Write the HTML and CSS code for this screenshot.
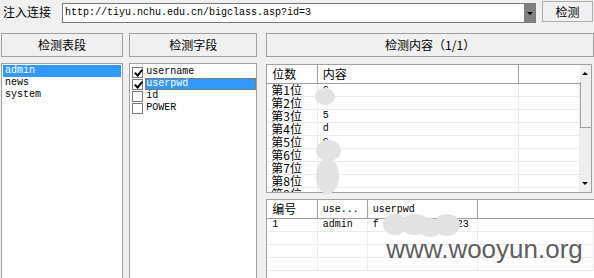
FILE: index.html
```html
<!DOCTYPE html>
<html lang="zh-CN">
<head>
  <meta charset="UTF-8" />
  <title>注入检测</title>
  <link rel="stylesheet" href="styles.css">
</head>
<body>
  <div class="window">
    <div class="topbar">
      <span class="label">注入连接</span>
      <div class="combo">
        <span class="combo-text">http://tiyu.nchu.edu.cn/bigclass.asp?id=3</span>
        <span class="combo-arrow"></span>
      </div>
      <button class="btn detect">检测</button>
    </div>

    <div class="panels">
      <div class="col col-tables">
        <div class="head-btn">检测表段</div>
        <ul class="listbox">
          <li class="selected">admin</li>
          <li>news</li>
          <li>system</li>
        </ul>
      </div>

      <div class="col col-fields">
        <div class="head-btn">检测字段</div>
        <ul class="listbox checklist">
          <li><span class="check on"></span><span class="item">username</span></li>
          <li><span class="check on"></span><span class="item focused">userpwd</span></li>
          <li><span class="check"></span><span class="item">id</span></li>
          <li><span class="check"></span><span class="item">POWER</span></li>
        </ul>
      </div>

      <div class="col col-content">
        <div class="head-btn">检测内容（1/1）</div>

        <div class="grid-box top-grid">
          <div class="grid-view">
            <table class="grid">
              <colgroup><col class="c-pos"><col class="c-val"><col></colgroup>
              <thead>
                <tr><th class="cjk">位数</th><th class="cjk">内容</th><th></th></tr>
              </thead>
              <tbody id="digits"></tbody>
            </table>
          </div>
          <div class="vscroll">
            <div class="sb-btn up"></div>
            <div class="sb-thumb"></div>
            <div class="sb-track"></div>
            <div class="sb-btn down"></div>
          </div>
        </div>

        <div class="grid-box bottom-grid">
          <table class="grid">
            <colgroup><col class="c-id"><col class="c-user"><col class="c-pwd"><col></colgroup>
            <thead>
              <tr><th class="cjk">编号</th><th>use...</th><th>userpwd</th><th></th></tr>
            </thead>
            <tbody>
              <tr><td>1</td><td>admin</td><td>f<span class="gap"></span>23</td><td></td></tr>
              <tr><td></td><td></td><td></td><td></td></tr>
              <tr><td></td><td></td><td></td><td></td></tr>
              <tr><td></td><td></td><td></td><td></td></tr>
            </tbody>
          </table>
        </div>

        <!-- blurred-out values -->
        <span class="blob" style="left:49px;top:55px;width:20px;height:17px"></span>
        <span class="blob" style="left:50px;top:107px;width:25px;height:21px"></span>
        <span class="blob" style="left:50px;top:125px;width:23px;height:36px"></span>
        <span class="blob" style="left:117px;top:181px;width:24px;height:21px"></span>
        <span class="blob" style="left:134px;top:181px;width:30px;height:21px"></span>
        <span class="blob" style="left:152px;top:185px;width:24px;height:19px"></span>
        <span class="blob" style="left:168px;top:181px;width:26px;height:22px"></span>

        <div class="watermark">www.wooyun.org</div>
      </div>
    </div>
  </div>

  <script>
    const values = ['c', '', '5', 'd', 'c', '', '', '', ''];
    const body = document.getElementById('digits');
    values.forEach((v, i) => {
      const tr = document.createElement('tr');
      tr.innerHTML = `<td class="cjk">第${i + 1}位</td><td>${v}</td><td></td>`;
      body.appendChild(tr);
    });
  </script>
</body>
</html>
```

FILE: styles.css
```css
* {
  margin: 0;
  padding: 0;
  box-sizing: border-box;
}

body {
  width: 594px;
  height: 278px;
  overflow: hidden;
  background: #f0f0f0;
  font-family: 'Liberation Mono', monospace;
  font-size: 10px;
  color: #000;
}

.window {
  width: 594px;
  height: 278px;
  overflow: hidden;
}

.topbar {
  display: flex;
  align-items: flex-start;
  height: 33px;
  padding: 1px 1px 0 3px;
}

.label,
.head-btn,
.btn,
.cjk {
  font-family: 'Noto Sans CJK SC', 'Noto Sans', sans-serif;
  font-size: 12px;
}

.label {
  margin-top: 3px;
  line-height: 16px;
  width: 59px;
}

.combo {
  display: flex;
  width: 474px;
  height: 20px;
  margin-top: 2px;
  border: 1px solid #7a7a7a;
  background: white;
}

.combo-text {
  flex: 1;
  padding-left: 2px;
  line-height: 17px;
  white-space: nowrap;
}

.combo-arrow {
  position: relative;
  width: 11px;
  background: #808080;
}

.combo-arrow::after {
  content: '';
  position: absolute;
  left: 3px;
  top: 8px;
  border-left: 3px solid transparent;
  border-right: 3px solid transparent;
  border-top: 3px solid #000;
}

.btn {
  width: 51px;
  height: 21px;
  margin-left: 6px;
  border: 1px solid #adadad;
  background: #f0f0f0;
  color: #000;
  line-height: 18px;
}

.panels {
  display: flex;
  padding-left: 1px;
}

.col {
  display: flex;
  flex-direction: column;
}

.col-tables {
  width: 123px;
}

.col-fields {
  width: 129px;
  margin-left: 6px;
}

.col-content {
  position: relative;
  width: 330px;
  margin-left: 9px;
}

.head-btn {
  height: 24px;
  border: 1px solid #a0a0a0;
  background: #f0f0f0;
  text-align: center;
  line-height: 22px;
}

.listbox {
  list-style: none;
  height: 230px;
  margin-top: 6px;
  padding: 1px;
  border: 1px solid #a0a0a0;
  background: white;
}

.col-tables .listbox {
  width: 122px;
}

.listbox li {
  height: 12px;
  line-height: 12px;
  padding-left: 2px;
  white-space: nowrap;
}

.listbox li.selected {
  background: #3399ff;
  color: white;
}

.checklist {
  padding: 2px 0 0 2px;
}

.checklist li {
  display: flex;
  align-items: center;
  padding-left: 0;
}

.check {
  position: relative;
  width: 11px;
  height: 11px;
  border: 1px solid #7a7a7a;
  background: white;
  flex-shrink: 0;
}

.check.on::after {
  content: '';
  position: absolute;
  left: 3px;
  top: 0;
  width: 3px;
  height: 6px;
  border-right: 2px solid #000;
  border-bottom: 2px solid #000;
  transform: rotate(40deg);
}

.item {
  flex: 1;
  height: 12px;
  margin-left: 2px;
  padding-left: 1px;
  line-height: 11px;
}

.item.focused {
  background: #3399ff;
  color: white;
  outline: 1px dotted #c06000;
  outline-offset: -1px;
}

.grid-box {
  border: 1px solid #a0a0a0;
  background: white;
  overflow: hidden;
}

.top-grid {
  display: flex;
  width: 326px;
  height: 129px;
  margin-top: 7px;
}

.grid-view {
  width: 315px;
  overflow: hidden;
}

.bottom-grid {
  height: 80px;
  margin-top: 6px;
  border-right: none;
}

.grid {
  width: 100%;
  border-collapse: collapse;
  table-layout: fixed;
}

.grid col.c-pos,
.grid col.c-id,
.grid col.c-user {
  width: 50px;
}

.grid col.c-val {
  width: 201px;
}

.grid col.c-pwd {
  width: 110px;
}

.grid th {
  height: 18px;
  padding: 3px 0 0 5px;
  font-weight: normal;
  text-align: left;
  line-height: 14px;
  border-right: 1px solid #a0a0a0;
  border-bottom: 1px solid #a0a0a0;
  white-space: nowrap;
  overflow: hidden;
}

.grid th:last-child {
  border-right: none;
}

.grid th.cjk {
  padding-top: 1px;
}

.grid td {
  height: 13px;
  padding: 0 0 0 5px;
  line-height: 12px;
  border-right: 1px solid #ececec;
  border-bottom: 1px solid #ececec;
  white-space: nowrap;
  overflow: hidden;
}

.grid td.cjk {
  padding-left: 4px;
  font-size: 12px;
  line-height: 12px;
}

.gap {
  display: inline-block;
  width: 78px;
}

.vscroll {
  display: flex;
  flex-direction: column;
  width: 11px;
  background: #f0f0f0;
}

.sb-btn {
  position: relative;
  height: 17px;
  background: #f0f0f0;
}

.sb-btn::after {
  content: '';
  position: absolute;
  left: 2px;
  top: 7px;
  border-left: 3px solid transparent;
  border-right: 3px solid transparent;
}

.sb-btn.up::after {
  border-bottom: 3px solid #000;
}

.sb-btn.down::after {
  border-top: 3px solid #000;
}

.sb-thumb {
  height: 46px;
  border-left: 1px solid #a0a0a0;
  border-bottom: 1px solid #a0a0a0;
  background: #f0f0f0;
}

.sb-track {
  flex: 1;
  background-color: #f4f4f4;
  background-image: linear-gradient(45deg, #e8e8e8 25%, transparent 25%, transparent 75%, #e8e8e8 75%),
    linear-gradient(45deg, #e8e8e8 25%, transparent 25%, transparent 75%, #e8e8e8 75%);
  background-size: 2px 2px;
  background-position: 0 0, 1px 1px;
}

.blob {
  position: absolute;
  border-radius: 50%;
  background: #e2e2e2;
}

.watermark {
  position: absolute;
  left: 120px;
  top: 201px;
  font-family: 'Liberation Sans', Arial, sans-serif;
  font-size: 26px;
  line-height: 30px;
  color: #444;
  opacity: 0.85;
  white-space: nowrap;
}
```
